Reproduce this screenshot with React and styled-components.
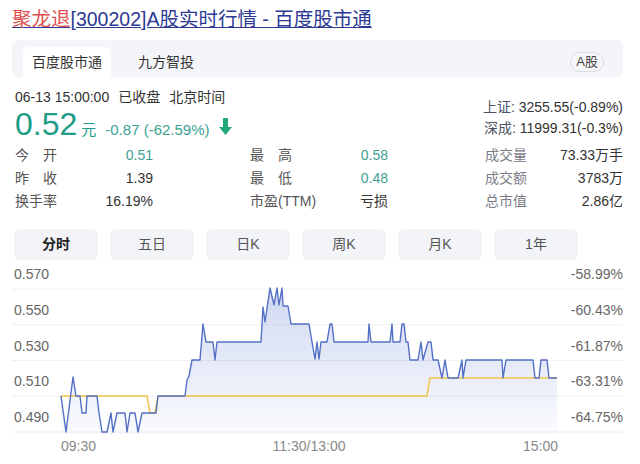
import React from "react";
import styled, { createGlobalStyle } from "styled-components";

const GlobalStyle = createGlobalStyle`
  body {
    margin: 0;
    background: #fff;
    font-family: "Liberation Sans", Arial, "Noto Sans CJK SC", sans-serif;
    color: #333;
  }
`;

const Page = styled.div`
  width: 640px;
  height: 464px;
  overflow: hidden;
  padding: 8px 17px 0 12px;
  box-sizing: border-box;
`;

const Title = styled.a`
  display: block;
  font-size: 19.5px;
  line-height: 22px;
  color: #2c3a94;
  text-decoration: underline;
  white-space: nowrap;
  & em {
    font-style: normal;
    color: #e05050;
  }
`;

const SourceBar = styled.div`
  margin-top: 10px;
  height: 37px;
  box-sizing: border-box;
  padding: 7px 19px 0 11px;
  background: #f4f5f8;
  border-radius: 6px;
  display: flex;
  align-items: stretch;
  gap: 18px;
`;

const SourceTab = styled.div`
  padding: 0 9px 2px;
  display: flex;
  align-items: center;
  font-size: 14px;
  color: #333;
  background: ${(p) => (p.$active ? "#fff" : "transparent")};
  border-radius: 6px 6px 0 0;
`;

const Market = styled.span`
  margin-left: auto;
  align-self: center;
  margin-top: -1px;
  height: 20px;
  line-height: 18px;
  box-sizing: border-box;
  padding: 0 5px;
  font-size: 13px;
  color: #444;
  border: 1px solid #dcdde2;
  border-radius: 10px;
  background: #f7f7f9;
`;

const Quote = styled.div`
  margin-top: 11px;
  display: flex;
  justify-content: space-between;
  padding-left: 3px;
`;

const DateLine = styled.div`
  font-size: 14px;
  line-height: 18px;
  color: #333;
  & span {
    margin-left: 9px;
  }
`;

const PriceLine = styled.div`
  display: flex;
  align-items: baseline;
  height: 36px;
  line-height: 36px;
  color: #1e9c88;
`;

const Price = styled.span`
  font-size: 32px;
`;

const Unit = styled.span`
  font-size: 15px;
  margin-left: 4px;
`;

const Change = styled.span`
  font-size: 15px;
  margin-left: 9px;
  color: #3aa292;
`;

const Arrow = styled.svg`
  margin-left: 9px;
  align-self: center;
  margin-top: 4px;
`;

const Indexes = styled.div`
  padding-top: 8.5px;
  font-size: 14px;
  line-height: 21px;
  text-align: right;
  color: #333;
  & b {
    font-weight: normal;
    color: #4d5264;
  }
`;

const Stats = styled.div`
  margin-top: 2px;
  padding-left: 3px;
  display: grid;
  grid-template-columns: repeat(3, 138px);
  justify-content: space-between;
`;

const StatCol = styled.div`
  display: flex;
  flex-direction: column;
`;

const StatRow = styled.div`
  display: flex;
  justify-content: space-between;
  font-size: 14px;
  line-height: 23px;
  white-space: nowrap;
`;

const StatLabel = styled.span`
  color: ${(p) => (p.$light ? "#7a7d86" : "#555")};
  ${(p) => (p.$justify ? "width: 42px; text-align-last: justify;" : "")}
`;

const StatValue = styled.span`
  color: ${(p) => (p.$teal ? "#3f9f92" : "#333")};
`;

const Periods = styled.div`
  margin-top: 16px;
  padding-left: 2px;
  display: flex;
  gap: 12px;
`;

const Period = styled.div`
  width: 84px;
  height: 31px;
  line-height: 31px;
  text-align: center;
  font-size: 14px;
  border-radius: 6px;
  background: #f3f4f7;
  color: ${(p) => (p.$active ? "#222" : "#555")};
  font-weight: ${(p) => (p.$active ? "bold" : "normal")};
`;

const ChartBox = styled.svg`
  display: block;
  margin-top: 2px;
`;

const linePts = [
  [61, 397], [66, 433], [73, 378], [76, 397], [80, 397], [82, 414], [86, 414], [87, 397],
  [97, 397], [99, 414], [102, 433], [107, 433], [111, 414], [113, 433], [117, 414], [125, 414],
  [127, 433], [130, 414], [135, 414], [138, 433], [142, 414], [156, 414], [158, 397], [185, 397],
  [187, 381], [189, 377], [192, 361], [200, 361], [203, 325], [206, 343], [213, 343], [215, 361],
  [217, 343], [261, 343], [263, 308], [265, 323], [270, 289], [274, 306], [277, 289], [279, 306],
  [282, 289], [283, 307], [288, 307], [291, 325], [309, 325], [312, 343], [315, 360], [317, 343],
  [319, 360], [321, 343], [327, 343], [330, 325], [332, 325], [334, 343], [368, 343], [369, 325],
  [371, 343], [390, 343], [392, 325], [393, 343], [400, 343], [402, 325], [404, 325], [406, 343],
  [408, 343], [410, 361], [418, 361], [421, 343], [423, 361], [428, 343], [431, 343], [433, 361],
  [438, 361], [442, 379], [445, 361], [448, 379], [458, 379], [462, 361], [463, 379], [466, 361],
  [502, 361], [503, 379], [506, 361], [533, 361], [535, 379], [539, 379], [541, 361], [547, 361],
  [549, 379], [557, 379],
];

const avgPts = [
  [61, 397], [147, 397], [150, 414], [155, 414], [158, 397], [427, 397], [430, 379], [557, 379],
];

const toPath = (pts) => pts.map((p, i) => `${i ? "L" : "M"}${p[0]} ${p[1]}`).join(" ");

const grid = [290, 325.75, 361.5, 397.25, 433];
const leftLabels = ["0.570", "0.550", "0.530", "0.510", "0.490"];
const rightLabels = ["-58.99%", "-60.43%", "-61.87%", "-63.31%", "-64.75%"];

function Chart() {
  const area = `${toPath(linePts)} L557 435 L61 435 Z`;
  return (
    <ChartBox width="611" height="201" viewBox="12 263 611 201">
      <defs>
        <linearGradient id="fill" x1="0" y1="289" x2="0" y2="436" gradientUnits="userSpaceOnUse">
          <stop offset="0" stopColor="#5a78d0" stopOpacity="0.28" />
          <stop offset="1" stopColor="#5a78d0" stopOpacity="0.03" />
        </linearGradient>
      </defs>
      {grid.map((y) => (
        <line key={y} x1="12" x2="623" y1={y} y2={y} stroke="#eff0f4" strokeWidth="1" />
      ))}
      <path d={area} fill="url(#fill)" />
      <path d={toPath(avgPts)} fill="none" stroke="#f1c24a" strokeWidth="1.5" />
      <path d={toPath(linePts)} fill="none" stroke="#5470c6" strokeWidth="1.4" strokeLinejoin="round" />
      <g fontSize="14" fill="#666" fontFamily="Liberation Sans, Arial, sans-serif">
        {leftLabels.map((t, i) => (
          <text key={t} x="14" y={grid[i] - 10}>{t}</text>
        ))}
        {rightLabels.map((t, i) => (
          <text key={t} x="623" y={grid[i] - 10} textAnchor="end">{t}</text>
        ))}
        <text x="61" y="452" fill="#888">09:30</text>
        <text x="309" y="452" fill="#888" textAnchor="middle">11:30/13:00</text>
        <text x="558" y="452" fill="#888" textAnchor="end">15:00</text>
      </g>
    </ChartBox>
  );
}

export default function App() {
  return (
    <Page>
      <GlobalStyle />
      <Title>
        <em>聚龙退</em>[300202]A股实时行情 - 百度股市通
      </Title>
      <SourceBar>
        <SourceTab $active>百度股市通</SourceTab>
        <SourceTab>九方智投</SourceTab>
        <Market>A股</Market>
      </SourceBar>
      <Quote>
        <div>
          <DateLine>
            06-13 15:00:00<span>已收盘</span>
            <span>北京时间</span>
          </DateLine>
          <PriceLine>
            <Price>0.52</Price>
            <Unit>元</Unit>
            <Change>-0.87 (-62.59%)</Change>
            <Arrow width="13" height="17" viewBox="0 0 13 17">
              <path d="M4 0h5v9h4l-6.5 8L0 9h4z" fill="#22a878" />
            </Arrow>
          </PriceLine>
        </div>
        <Indexes>
          <div>
            <b>上证:</b> 3255.55(-0.89%)
          </div>
          <div>
            <b>深成:</b> 11999.31(-0.3%)
          </div>
        </Indexes>
      </Quote>
      <Stats>
        <StatCol>
          <StatRow>
            <StatLabel $justify>今开</StatLabel>
            <StatValue $teal>0.51</StatValue>
          </StatRow>
          <StatRow>
            <StatLabel $justify>昨收</StatLabel>
            <StatValue>1.39</StatValue>
          </StatRow>
          <StatRow>
            <StatLabel>换手率</StatLabel>
            <StatValue>16.19%</StatValue>
          </StatRow>
        </StatCol>
        <StatCol>
          <StatRow>
            <StatLabel $justify>最高</StatLabel>
            <StatValue $teal>0.58</StatValue>
          </StatRow>
          <StatRow>
            <StatLabel $justify>最低</StatLabel>
            <StatValue $teal>0.48</StatValue>
          </StatRow>
          <StatRow>
            <StatLabel>市盈(TTM)</StatLabel>
            <StatValue>亏损</StatValue>
          </StatRow>
        </StatCol>
        <StatCol>
          <StatRow>
            <StatLabel $light>成交量</StatLabel>
            <StatValue>73.33万手</StatValue>
          </StatRow>
          <StatRow>
            <StatLabel $light>成交额</StatLabel>
            <StatValue>3783万</StatValue>
          </StatRow>
          <StatRow>
            <StatLabel $light>总市值</StatLabel>
            <StatValue>2.86亿</StatValue>
          </StatRow>
        </StatCol>
      </Stats>
      <Periods>
        <Period $active>分时</Period>
        <Period>五日</Period>
        <Period>日K</Period>
        <Period>周K</Period>
        <Period>月K</Period>
        <Period>1年</Period>
      </Periods>
      <Chart />
    </Page>
  );
}
